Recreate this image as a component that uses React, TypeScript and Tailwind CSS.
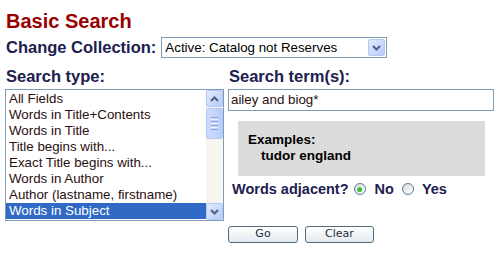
import React from "react";

const Chevron = ({ up = false }: { up?: boolean }) => (
  <svg width="9" height="6" viewBox="0 0 9 6" className="block">
    {up ? (
      <path d="M1 5 L4.5 1.5 L8 5" fill="none" stroke="#4d6185" strokeWidth="2" />
    ) : (
      <path d="M1 1 L4.5 4.5 L8 1" fill="none" stroke="#4d6185" strokeWidth="2" />
    )}
  </svg>
);

const XpButton = ({ up = false, className = "" }: { up?: boolean; className?: string }) => (
  <div
    className={`flex items-center justify-center rounded-[2px] border border-[#b6c8f4] bg-gradient-to-br from-[#e1eafe] to-[#b6cbf9] ${className}`}
  >
    <Chevron up={up} />
  </div>
);

const Radio = ({ checked = false }: { checked?: boolean }) => (
  <div className="flex h-[12px] w-[12px] items-center justify-center rounded-full border border-[#5b7aa0] bg-gradient-to-br from-[#dcdcd7] to-white">
    {checked && (
      <div className="h-[5px] w-[5px] rounded-full bg-gradient-to-br from-[#55d551] to-[#21a121]" />
    )}
  </div>
);

const items = [
  "All Fields",
  "Words in Title+Contents",
  "Words in Title",
  "Title begins with...",
  "Exact Title begins with...",
  "Words in Author",
  "Author (lastname, firstname)",
  "Words in Subject",
];

export default function App() {
  return (
    <div className="h-[259px] w-[504px] overflow-hidden bg-white font-['Liberation_Sans',Arial,sans-serif]">
      <div className="pl-[6px] pt-[10px] text-[20px] font-bold leading-[23px] text-[#990000]">
        Basic Search
      </div>

      <div className="mt-[4px] flex h-[21px] items-center">
        <div className="pl-[6px] text-[16.5px] font-bold leading-[21px] text-[#20204f]">
          Change Collection:
        </div>
        <div className="ml-[5px] flex h-[21px] w-[226px] items-center border border-[#7f9db9] bg-white pl-[3px] pr-[1px]">
          <div className="flex-1 text-[13.33px] leading-[16px] text-black">
            Active: Catalog not Reserves
          </div>
          <XpButton className="h-[17px] w-[17px]" />
        </div>
      </div>

      <div className="mt-[8px] flex">
        <div className="ml-[5px] w-[219px]">
          <div className="pl-[1px] text-[16.5px] font-bold leading-[20px] text-[#20204f]">
            Search type:
          </div>
          <div className="mt-[3px] flex h-[132px] border border-[#7f9db9] bg-white">
            <div className="w-[200px] py-[1px]">
              {items.map((t, i) => (
                <div
                  key={t}
                  className={`h-[16px] whitespace-nowrap pl-[3px] text-[13.33px] leading-[16px] ${
                    i === items.length - 1 ? "bg-[#316ac5] text-white" : "text-[#2a0f0f]"
                  }`}
                >
                  {t}
                </div>
              ))}
            </div>
            <div className="flex w-[17px] flex-col bg-[#f6f5f0]">
              <XpButton up className="h-[17px] w-[17px]" />
              <div className="mt-[1px] flex h-[31px] w-[17px] flex-col items-center justify-center gap-[1px] rounded-[2px] border border-[#b6c8f4] bg-gradient-to-r from-[#cddafd] to-[#b9cdfb]">
                <div className="h-[1px] w-[7px] bg-[#8ca6e8]" />
                <div className="h-[1px] w-[7px] bg-[#eef3ff]" />
                <div className="h-[1px] w-[7px] bg-[#8ca6e8]" />
                <div className="h-[1px] w-[7px] bg-[#eef3ff]" />
                <div className="h-[1px] w-[7px] bg-[#8ca6e8]" />
                <div className="h-[1px] w-[7px] bg-[#eef3ff]" />
                <div className="h-[1px] w-[7px] bg-[#8ca6e8]" />
              </div>
              <div className="flex-1" />
              <XpButton className="h-[17px] w-[17px]" />
            </div>
          </div>
        </div>

        <div className="ml-[4px] flex w-[266px] flex-col">
          <div className="pl-[1px] text-[16.5px] font-bold leading-[20px] text-[#20204f]">
            Search term(s):
          </div>
          <div className="mt-[3px] flex h-[22px] items-center border border-[#7f9db9] bg-white pl-[2px] text-[13.33px] text-[#2a0f0f]">
            ailey and biog*
          </div>
          <div className="ml-[10px] mt-[10px] h-[55px] w-[247px] bg-[#dcdcdc] pl-[10px] pt-[11px] text-[13.5px] font-bold leading-[16px] text-black">
            <div>Examples:</div>
            <div className="pl-[13px]">tudor england</div>
          </div>
          <div className="mt-[4px] flex h-[18px] items-center pl-[4px] text-[14.5px] font-bold leading-[18px] text-[#20204f]">
            <span>Words adjacent?</span>
            <div className="ml-[5px]">
              <Radio checked />
            </div>
            <span className="ml-[9px]">No</span>
            <div className="ml-[8px]">
              <Radio />
            </div>
            <span className="ml-[8px]">Yes</span>
          </div>
          <div className="mt-[28px] flex gap-[7px]">
            <div className="flex h-[17px] w-[70px] items-center justify-center rounded-[3px] border border-[#4f6b7d] bg-gradient-to-b from-white to-[#e2eaef] font-['DejaVu_Sans',sans-serif] text-[11px] text-[#1c2d3a]">
              Go
            </div>
            <div className="flex h-[17px] w-[69px] items-center justify-center rounded-[3px] border border-[#4f6b7d] bg-gradient-to-b from-white to-[#e2eaef] font-['DejaVu_Sans',sans-serif] text-[11px] text-[#1c2d3a]">
              Clear
            </div>
          </div>
        </div>
      </div>
    </div>
  );
}
